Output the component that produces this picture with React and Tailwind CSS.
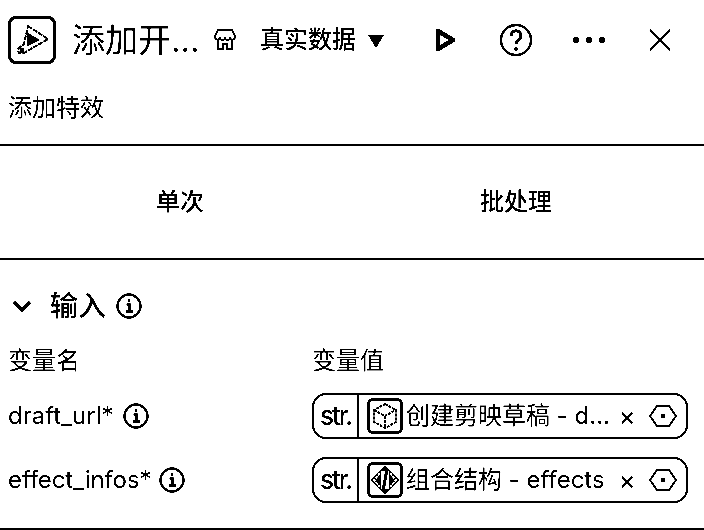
import React from "react";

function InfoIcon() {
  return (
    <svg width="26" height="26" viewBox="0 0 26 26" fill="none" stroke="#000" strokeWidth="2.4" className="shrink-0">
      <circle cx="13" cy="13" r="11.5" />
      <path d="M10.5 11.5H13.5V18.5M10 18.5H17" />
      <circle cx="13" cy="7.5" r="1.4" fill="#000" stroke="none" />
    </svg>
  );
}

function HexIcon() {
  return (
    <svg width="28" height="24" viewBox="0 0 28 24" fill="none" stroke="#000" strokeWidth="2" className="shrink-0">
      <path d="M8 2H20L27 12L20 22H8L1 12Z" strokeLinejoin="round" />
      <rect x="12" y="10" width="4" height="4" fill="#000" stroke="none" />
    </svg>
  );
}

function BoxIcon() {
  return (
    <div className="w-9 h-9 shrink-0 border-[3px] border-black rounded-md flex items-center justify-center">
      <svg width="28" height="28" viewBox="0 0 28 28" fill="none" stroke="#000" strokeWidth="2" strokeDasharray="3 1">
        <path d="M14 2L25 8V20L14 26L3 20V8Z" />
        <path d="M3 8L14 14L25 8M14 14V26" />
      </svg>
    </div>
  );
}

function CodeIcon() {
  return (
    <div className="w-9 h-9 shrink-0 border-[3px] border-black rounded-md flex items-center justify-center">
      <svg width="30" height="30" viewBox="0 0 30 30" fill="none" stroke="#000">
        <path d="M15 1L29 15L15 29L1 15Z" fill="#000" />
        <path d="M10 8L4 15L10 22" stroke="#fff" strokeWidth="2" strokeDasharray="3 1" />
        <path d="M20 8L26 15L20 22" stroke="#fff" strokeWidth="2" strokeDasharray="3 1" />
        <path d="M11 6V24H19V6Z" fill="#fff" stroke="none" />
        <path d="M17 4L13 26" strokeWidth="3" />
      </svg>
    </div>
  );
}

function VarTag({ icon, label }) {
  return (
    <div className="w-[376px] h-[46px] -mt-[1px] border-2 border-black rounded-[14px] flex items-center">
      <span className="w-[45px] shrink-0 text-center text-[26px] font-medium tracking-[-2px] leading-none border-r-2 border-black h-full flex items-center justify-center">
        str.
      </span>
      <div className="ml-2 flex items-center gap-[3px] flex-1 min-w-0">
        {icon}
        <span className="text-[24px] leading-none whitespace-nowrap">{label}</span>
      </div>
      <span className="text-[26px] leading-none mr-[13px]">×</span>
      <div className="mr-[9px]"><HexIcon /></div>
    </div>
  );
}

export default function App() {
  return (
    <div className="w-[704px] h-[530px] overflow-hidden bg-white text-black contrast-[1000%] font-['Inter','Noto_Sans_CJK_SC',sans-serif]">
      {/* header */}
      <div className="h-[80px] pl-2 flex items-center">
        <div className="w-12 h-12 shrink-0 border-[3px] border-black rounded-lg flex items-center justify-center">
          <svg width="36" height="36" viewBox="0 0 36 36" fill="none" stroke="#000" strokeWidth="2">
            <path d="M14 4L34 17L10 31C4 33 2 27 6 25L10 22Z" strokeDasharray="5 1" />
            <path d="M14 12L24 18L14 23Z" fill="#000" />
            <circle cx="8" cy="28" r="1.5" fill="#000" />
          </svg>
        </div>
        <span className="ml-4 text-[33px] leading-none whitespace-nowrap w-[141px]">添加开...</span>
        <svg width="24" height="24" viewBox="0 0 24 24" fill="none" stroke="#000" strokeWidth="2" className="shrink-0">
          <path d="M5 2H19L22 8C22 12 18 13 17 10C16 13 13 13 12 10C11 13 8 13 7 10C6 13 2 12 2 8Z" strokeLinejoin="round" />
          <path d="M5 13V21H10V16H14V21H19V13" strokeLinejoin="round" />
        </svg>
        <span className="ml-[23px] text-[24px] font-medium leading-none whitespace-nowrap">真实数据</span>
        <svg width="16" height="14" viewBox="0 0 16 14" className="ml-[12px] shrink-0 mt-1">
          <path d="M0 0H16L8 13Z" fill="#000" />
        </svg>
        <svg width="22" height="24" viewBox="0 0 22 24" fill="none" stroke="#000" strokeWidth="4.5" className="ml-[51px] shrink-0">
          <path d="M3 3L18 12L3 21Z" strokeLinejoin="round" />
        </svg>
        <svg width="34" height="34" viewBox="0 0 34 34" fill="none" stroke="#000" strokeWidth="2.5" className="ml-[42px] shrink-0">
          <circle cx="17" cy="17" r="15" />
          <path d="M12 13C12 6 22 6 22 13C22 17 17 17 17 21" strokeWidth="3" />
          <circle cx="17" cy="26" r="2" fill="#000" stroke="none" />
        </svg>
        <div className="ml-[40px] flex gap-[7px] shrink-0">
          <span className="w-[6px] h-[6px] rounded-full bg-black" />
          <span className="w-[6px] h-[6px] rounded-full bg-black" />
          <span className="w-[6px] h-[6px] rounded-full bg-black" />
        </div>
        <svg width="24" height="24" viewBox="0 0 24 24" fill="none" stroke="#000" strokeWidth="2.5" className="ml-[43px] shrink-0">
          <path d="M2 2L22 22M22 2L2 22" />
        </svg>
      </div>

      {/* description */}
      <div className="pl-2 h-[66px] text-[24px] leading-[56px] border-b-2 border-black">添加特效</div>

      {/* tabs */}
      <div className="h-[114px] grid grid-cols-[360px_312px] border-b-2 border-black text-[24px] font-medium">
        <div className="flex items-center justify-center">单次</div>
        <div className="flex items-center justify-center">批处理</div>
      </div>

      {/* inputs */}
      <div className="h-[270px] border-b-2 border-black">
        <div className="h-[89px] pl-[10px] pt-[3px] flex items-center">
          <svg width="24" height="24" viewBox="0 0 24 24" fill="none" stroke="#000" strokeWidth="3.5" className="shrink-0">
            <path d="M4 8L12 16L20 8" />
          </svg>
          <span className="ml-[16px] text-[28px] font-medium leading-none">输入</span>
          <div className="ml-[10px]"><InfoIcon /></div>
        </div>
        <div className="pl-2 flex text-[24px] leading-none h-[35px]">
          <span className="w-[304px]">变量名</span>
          <span>变量值</span>
        </div>
        <div className="pl-2 h-[64px] flex items-center">
          <div className="w-[304px] flex items-center gap-[9px] text-[24px] leading-none">
            draft_url*<InfoIcon />
          </div>
          <VarTag icon={<BoxIcon />} label="创建剪映草稿 - d..." />
        </div>
        <div className="pl-2 h-[64px] flex items-center">
          <div className="w-[304px] flex items-center gap-[8px] text-[24px] tracking-[-0.1px] leading-none">
            effect_infos*<InfoIcon />
          </div>
          <VarTag icon={<CodeIcon />} label="组合结构 - effects" />
        </div>
      </div>
    </div>
  );
}
